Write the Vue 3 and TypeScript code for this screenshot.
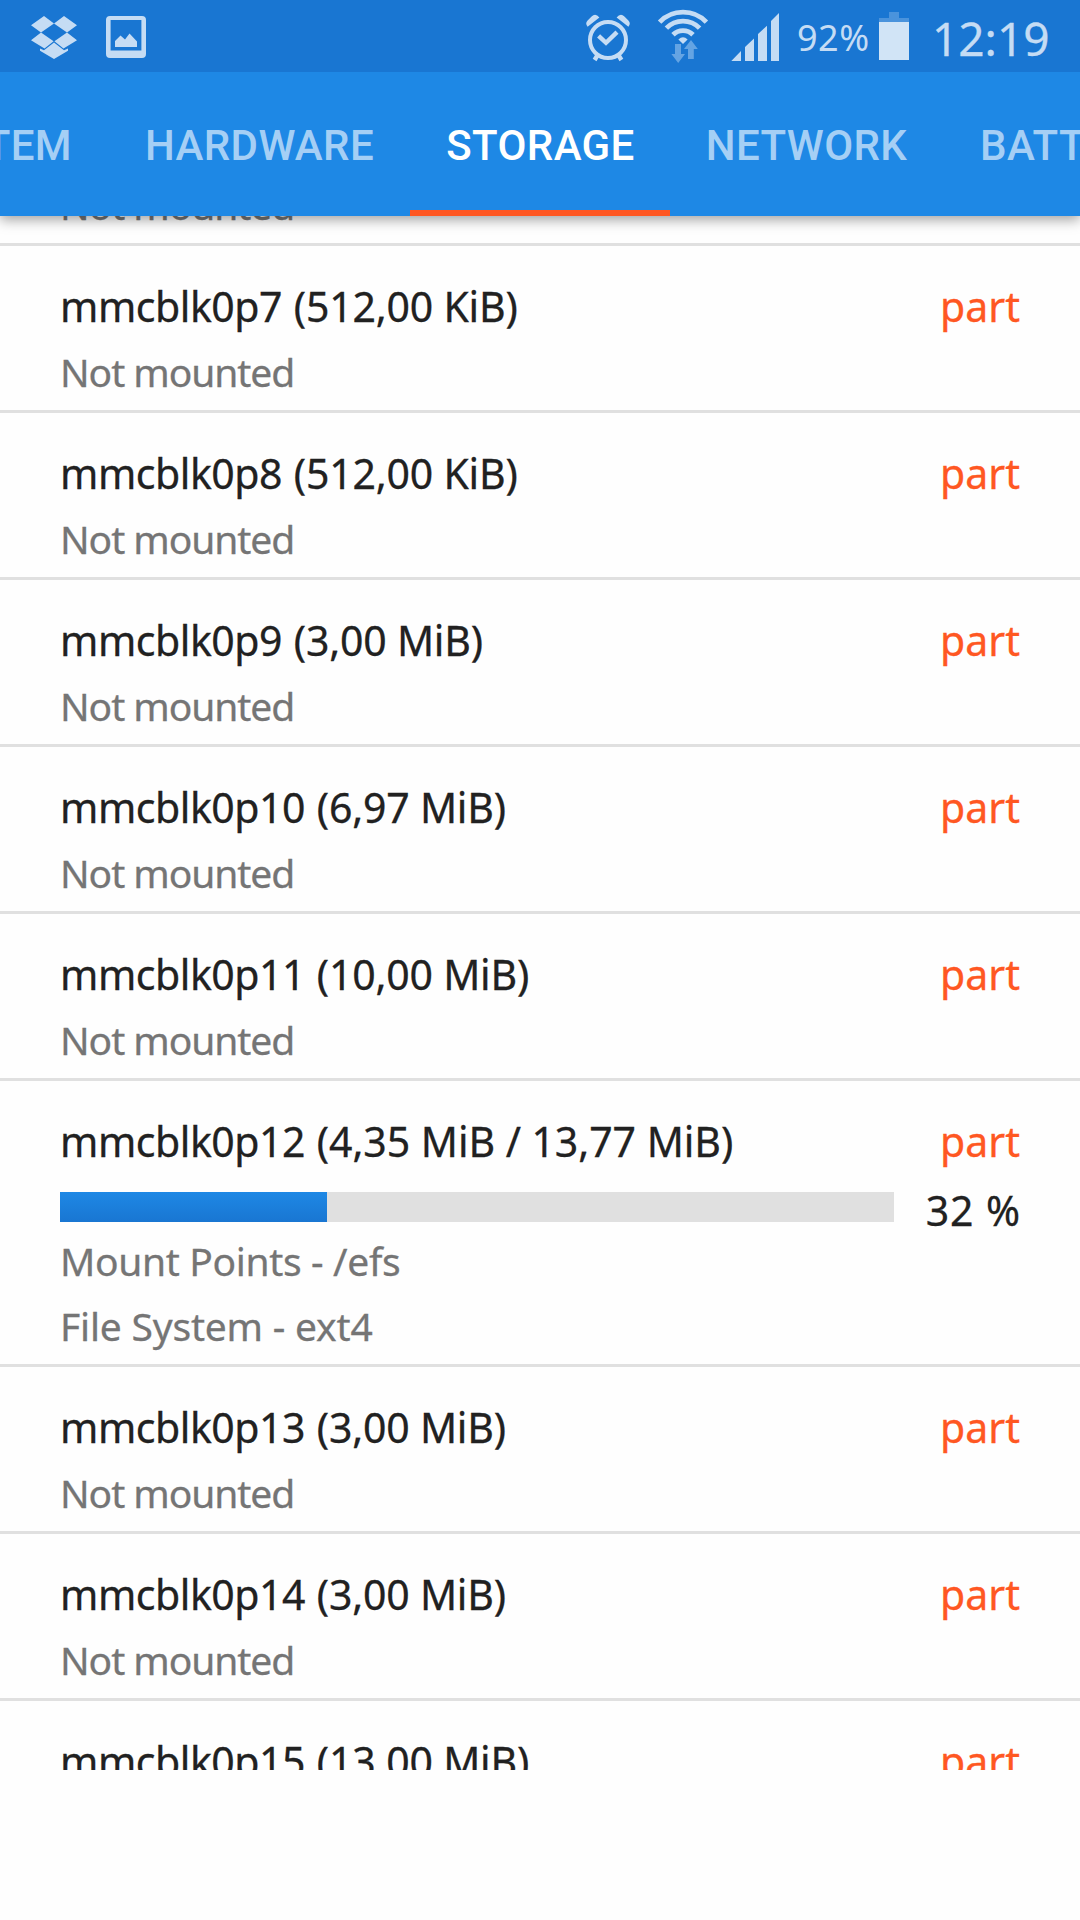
<script setup lang="ts">
interface Partition {
  name: string
  size: string
  used?: number
  details: string[]
}

const tabs: string[] = ['SYSTEM', 'HARDWARE', 'STORAGE', 'NETWORK', 'BATTERY']
const activeTab = 'STORAGE'

const idle = ['Not mounted']
const partitions: Partition[] = [
  { name: 'mmcblk0p6', size: '512,00 KiB', details: idle },
  { name: 'mmcblk0p7', size: '512,00 KiB', details: idle },
  { name: 'mmcblk0p8', size: '512,00 KiB', details: idle },
  { name: 'mmcblk0p9', size: '3,00 MiB', details: idle },
  { name: 'mmcblk0p10', size: '6,97 MiB', details: idle },
  { name: 'mmcblk0p11', size: '10,00 MiB', details: idle },
  { name: 'mmcblk0p12', size: '4,35 MiB / 13,77 MiB', used: 32, details: ['Mount Points - /efs', 'File System - ext4'] },
  { name: 'mmcblk0p13', size: '3,00 MiB', details: idle },
  { name: 'mmcblk0p14', size: '3,00 MiB', details: idle },
  { name: 'mmcblk0p15', size: '13,00 MiB', details: idle },
]
</script>

<template>
  <div class="screen">
    <header class="header">
      <div class="status">
        <svg class="notif" width="118" height="72" viewBox="30 0 118 72">
          <path d="M44 16L54 23.6 41 32.4 31 25.2zM64 16L54 23.6 67 32.4 77 25.2zM41 32.6L53.6 41.2 44.5 48.6 31 40.2zM67 32.6L54.4 41.2 63.5 48.6 77 40.2zM54 42.4L64 50.2 68 48.6V50.8L54 59 40 50.8V48.6L44 50.2z" />
          <path fill-rule="evenodd" d="M110 16h32a4 4 0 0 1 4 4v34a4 4 0 0 1-4 4h-32a4 4 0 0 1-4-4V20a4 4 0 0 1 4-4zm.6 4v30.6h30.8V20z" />
          <path d="M115 41L120.5 35.5 125 39.6 129.5 33.6 137 41.5V47H115z" />
        </svg>
        <svg class="signals" width="196" height="72" viewBox="584 0 196 72">
          <circle cx="608" cy="40" r="18" class="line" stroke-width="4" />
          <path class="line" stroke-width="4.4" d="M598.6 35.8L606 42.8 617 32.2" />
          <path class="line" stroke-width="4.4" d="M597.6 55L594.6 60M618.4 55L621.4 60" />
          <path d="M587.6 26.8Q584.8 23.5 587.6 20.6L591.6 16.4Q595.5 12.6 599.4 17.4zM628.4 26.8Q631.2 23.5 628.4 20.6L624.4 16.4Q620.5 12.6 616.6 17.4z" />
          <path class="line" stroke-width="4.8" d="M659.6 22.1A32.5 32.5 0 0 1 706.4 22.1M666.4 28.2A23 23 0 0 1 699.6 28.2M673 34.8A14 14 0 0 1 693 34.8" />
          <path d="M678.4 39.4Q683 35 687.6 39.4L683 44z" />
          <path class="dim" d="M675 44h6v10h4l-6.8 9-6.8-9h3.6zM691 40l6.8 9h-4v10h-5.8V49h-4z" />
          <path d="M731.3 61L741 51V61zM745 61V47L754 38.6V61zM758 61V34L767 25.8V61zM771 61V21L779 13V61z" />
        </svg>
        <span class="percent">92%</span>
        <svg class="battery" width="30" height="72" viewBox="0 0 30 72">
          <path fill="#4a93dc" d="M10 12h10v6h10v4H0v-4h10z" />
          <path fill="#d1e4f6" d="M0 22h30v38H0z" />
        </svg>
        <span class="clock">12:19</span>
      </div>
      <nav class="tabs">
        <div v-for="tab in tabs" :key="tab" class="tab" :class="{ active: tab === activeTab }">{{ tab }}</div>
      </nav>
    </header>

    <main class="viewport">
      <ul class="list">
        <li v-for="p in partitions" :key="p.name" class="row" :class="{ mounted: p.used }">
          <div class="title">
            <span><span class="name">{{ p.name }}</span> <span class="size">({{ p.size }})</span></span>
            <span class="kind">part</span>
          </div>
          <div v-if="p.used" class="usage">
            <div class="track"><div class="fill" :style="{ width: p.used + '%' }"></div></div>
            <span class="value">{{ p.used }} %</span>
          </div>
          <div class="details">
            <p v-for="d in p.details" :key="d">{{ d }}</p>
          </div>
        </li>
      </ul>
    </main>
  </div>
</template>

<style>
body {
  margin: 0;
  background: #fff;
}
</style>

<style scoped>
.screen {
  width: 1080px;
  height: 1920px;
  overflow: hidden;
  background: #fefefe;
  font-family: 'Noto Sans', sans-serif;
  color: #212121;
  white-space: nowrap;
}
.header {
  position: relative;
  z-index: 1;
  height: 216px;
  background: #1e88e5;
  box-shadow: 0 4px 12px rgba(0, 0, 0, 0.36);
}
.status {
  display: flex;
  height: 72px;
  background: #1976d2;
  color: #c5dcf4;
}
svg {
  flex: none;
  fill: #c5dcf4;
}
.line {
  fill: none;
  stroke: #c5dcf4;
}
.dim {
  fill: #64a4e3;
}
.notif {
  margin-left: 30px;
}
.signals {
  margin-left: 436px;
}
.percent {
  width: 82px;
  margin-left: 17px;
  font-size: 36px;
  line-height: 76px;
  letter-spacing: 0.5px;
}
.battery {
  fill: none;
}
.clock {
  margin-left: 23px;
  font-size: 46px;
  line-height: 77px;
  -webkit-text-stroke: 0.3px currentColor;
}
.tabs {
  display: grid;
  grid-template-columns: 108px 302px 260px 272px 138px;
  height: 144px;
  overflow: hidden;
  font-family: Roboto, sans-serif;
  font-weight: 500;
  font-size: 42px;
  line-height: 147px;
  letter-spacing: 0.4px;
  color: #a5cff5;
}
.tab {
  display: flex;
  justify-content: center;
  box-sizing: border-box;
  height: 144px;
  padding-left: 1px;
}
.tab:first-child {
  justify-content: flex-end;
  padding-right: 36px;
}
.tab:last-child {
  justify-content: flex-start;
  padding-left: 38px;
}
.tab.active {
  color: #fff;
  box-shadow: inset 0 -6px #ff5722;
}
.viewport {
  height: 1554px;
  overflow: hidden;
}
.list {
  margin: -137px 0 0;
  padding: 0;
  list-style: none;
}
.row {
  padding: 30px 60px 6px;
  border-bottom: 3px solid #e0e0e0;
  -webkit-text-stroke: 0.3px currentColor;
}
.title {
  display: flex;
  justify-content: space-between;
  font-size: 41px;
  line-height: 60px;
}
.name {
  letter-spacing: -0.45px;
}
.size {
  margin-left: 1px;
  letter-spacing: -0.2px;
}
.mounted .size {
  letter-spacing: -0.05px;
}
.kind {
  color: #ff5722;
}
.usage {
  display: flex;
  height: 57px;
}
.track {
  width: 834px;
  height: 30px;
  margin-top: 21px;
  background: #e0e0e0;
}
.fill {
  height: 100%;
  background: linear-gradient(#1e88e5, #1976d2);
}
.value {
  flex: 1;
  margin-right: -1px;
  padding-top: 20px;
  font-size: 41px;
  line-height: 38px;
  letter-spacing: 0.9px;
  text-align: right;
}
.title + .details {
  margin-top: 3px;
}
.details p {
  margin: 0;
  font-size: 39px;
  line-height: 65px;
  letter-spacing: -1.05px;
  color: #757575;
}
.mounted .details p {
  letter-spacing: -0.35px;
}
.mounted .details p:last-child {
  letter-spacing: -0.2px;
}
</style>
